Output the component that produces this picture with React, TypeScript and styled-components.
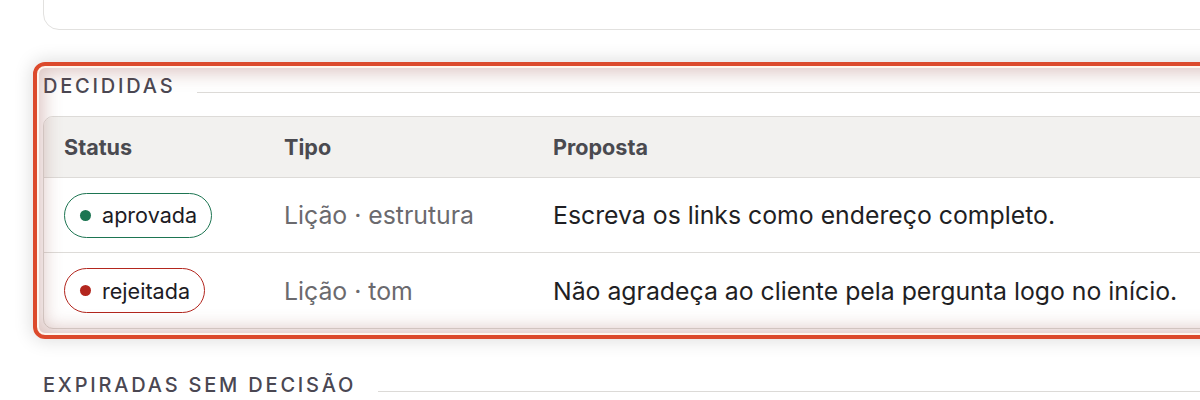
import React from "react";
import styled, { createGlobalStyle, css } from "styled-components";

type Status = "aprovada" | "rejeitada";

interface Decision {
  status: Status;
  tipo: string;
  proposta: string;
}

const decisions: Decision[] = [
  {
    status: "aprovada",
    tipo: "Lição · estrutura",
    proposta: "Escreva os links como endereço completo.",
  },
  {
    status: "rejeitada",
    tipo: "Lição · tom",
    proposta: "Não agradeça ao cliente pela pergunta logo no início.",
  },
];

const statusColors: Record<Status, string> = {
  aprovada: "#1d7552",
  rejeitada: "#b3261e",
};

const GlobalStyle = createGlobalStyle`
  html, body {
    margin: 0;
    padding: 0;
    background: #ffffff;
    overflow: hidden;
  }
  body {
    font-family: Inter, "Noto Sans", "Liberation Sans", sans-serif;
    color: #1f1f24;
  }
  * {
    box-sizing: border-box;
  }
`;

const Page = styled.div`
  width: 1250px;
  padding-left: 43px;
  display: flex;
  flex-direction: column;
`;

const TopCard = styled.div`
  height: 61px;
  margin-top: -31px;
  border: 1px solid #e2e1df;
  border-radius: 16px;
  background: #fff;
`;

const Section = styled.section<{ top: number; highlighted?: boolean }>`
  position: relative;
  margin-top: ${(p) => p.top}px;
  ${(p) =>
    p.highlighted &&
    css`
      &::after {
        content: "";
        position: absolute;
        left: -10px;
        top: -12px;
        right: -10px;
        bottom: -10px;
        border: 4px solid #dc4a2c;
        border-radius: 12px;
        pointer-events: none;
        box-shadow: 0 0 18px 2px rgba(0, 0, 0, 0.13),
          inset 0 0 0 2px #fff6ee,
          inset 0 0 18px 7px rgba(150, 80, 70, 0.32);
      }
    `}
`;

const Heading = styled.h2`
  display: flex;
  align-items: baseline;
  gap: 22px;
  margin: 0;
  font-size: 20px;
  font-weight: 500;
  letter-spacing: 0.14em;
  text-transform: uppercase;
  color: #4a4752;
  line-height: 24px;

  &::after {
    content: "";
    flex: 1;
    height: 1px;
    background: #dcdad7;
  }
`;

const Table = styled.table`
  width: 100%;
  margin-top: 18px;
  table-layout: fixed;
  border-collapse: separate;
  border-spacing: 0;
  border: 1px solid #dddbd8;
  border-radius: 10px;
  overflow: hidden;
`;

const Th = styled.th<{ w?: number }>`
  width: ${(p) => (p.w ? `${p.w}px` : "auto")};
  text-align: left;
  padding: 0 20px;
  height: 61px;
  background: #f2f1ef;
  border-bottom: 1px solid #dddbd8;
  font-size: 21.6px;
  font-weight: 650;
  color: #4a4a50;
`;

const Td = styled.td<{ muted?: boolean }>`
  padding: 0 20px;
  height: 75px;
  font-size: 24.8px;
  white-space: nowrap;
  color: ${(p) => (p.muted ? "#6b6a6e" : "#1f1f24")};
  tr:not(:last-child) > & {
    border-bottom: 1px solid #dddbd8;
  }
`;

const Badge = styled.span<{ status: Status }>`
  display: inline-flex;
  align-items: center;
  gap: 11px;
  height: 45px;
  padding: 0 14px 0 15px;
  border: 1.5px solid ${(p) => statusColors[p.status]};
  border-radius: 999px;
  font-size: 21.6px;
  color: #1c1b24;
  vertical-align: middle;

  &::before {
    content: "";
    flex-shrink: 0;
    width: 11px;
    height: 11px;
    border-radius: 50%;
    background: ${(p) => statusColors[p.status]};
  }
`;

export default function App() {
  return (
    <Page>
      <GlobalStyle />
      <TopCard />
      <Section top={44} highlighted>
        <Heading>Decididas</Heading>
        <Table>
          <thead>
            <tr>
              <Th w={220}>Status</Th>
              <Th w={269}>Tipo</Th>
              <Th>Proposta</Th>
            </tr>
          </thead>
          <tbody>
            {decisions.map((d) => (
              <tr key={d.proposta}>
                <Td>
                  <Badge status={d.status}>{d.status}</Badge>
                </Td>
                <Td muted>{d.tipo}</Td>
                <Td>{d.proposta}</Td>
              </tr>
            ))}
          </tbody>
        </Table>
      </Section>
      <Section top={44}>
        <Heading>Expiradas sem decisão</Heading>
      </Section>
    </Page>
  );
}
